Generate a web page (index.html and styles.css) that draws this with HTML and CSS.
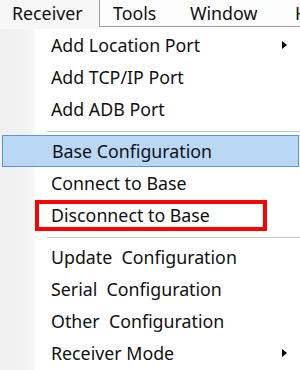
FILE: index.html
```html
<!DOCTYPE html>
<html>
<head>
<meta charset="utf-8">
<link rel="stylesheet" href="styles.css">
</head>
<body>
<div class="menubar">
  <div class="tab active">Receiver</div>
  <div class="bar-rest">
    <span class="tab tools">Tools</span>
    <span class="tab window">Window</span>
    <span class="tab help">H</span>
  </div>
</div>
<div class="dropdown">
  <div class="item">Add Location Port<span class="arrow"></span></div>
  <div class="item">Add TCP/IP Port</div>
  <div class="item">Add ADB Port</div>
  <div class="sep"><div class="line"></div></div>
  <div class="item hover">Base Configuration</div>
  <div class="item">Connect to Base</div>
  <div class="item marked">Disconnect to Base<span class="redbox"></span></div>
  <div class="sep"><div class="line"></div></div>
  <div class="item">Update  Configuration</div>
  <div class="item">Serial  Configuration</div>
  <div class="item">Other  Configuration</div>
  <div class="item">Receiver Mode<span class="arrow"></span></div>
</div>
</body>
</html>
```
FILE: styles.css
```css
html, body {
  margin: 0;
  padding: 0;
  background: #ffffff;
  width: 300px;
  height: 370px;
  overflow: hidden;
}
body {
  font-family: "Noto Sans", "Open Sans", sans-serif;
  font-size: 17.8px;
  color: #111111;
}
.menubar {
  display: flex;
  height: 29px;
  background: #ffffff;
}
.tab.active {
  width: 99px;
  box-sizing: border-box;
  padding-left: 12px;
  background: #f7f7f7;
  line-height: 26px;
}
.bar-rest {
  flex: 1;
  height: 27px;
  box-sizing: border-box;
  border-left: 1px solid #a0a0a0;
  border-bottom: 1px solid #a0a0a0;
  background: #fdfdfd;
  display: flex;
  line-height: 26px;
  white-space: nowrap;
  overflow: hidden;
}
.tools { margin-left: 13px; width: 77px; flex: none; }
.window { width: 105px; flex: none; }
.help { flex: none; }
.dropdown {
  background: linear-gradient(to right, #f0f0f0 0, #f3f3f3 30px, #f8f8f8 34px, #ffffff 35px);
  height: 341px;
}
.item {
  position: relative;
  display: flex;
  align-items: center;
  height: 32px;
  box-sizing: border-box;
  padding-left: 51px;
  white-space: pre;
}
.item.hover {
  margin-left: 2px;
  margin-right: 1px;
  padding-left: 49px;
  background: #b9d8f6;
  border: 1px solid #5d95dc;
}
.arrow {
  margin-left: auto;
  margin-right: 13px;
  width: 0;
  height: 0;
  border-top: 4px solid transparent;
  border-bottom: 4px solid transparent;
  border-left: 5px solid #000000;
}
.sep {
  height: 10px;
  padding-top: 6px;
  box-sizing: border-box;
}
.sep .line {
  margin-left: 47px;
  height: 1px;
  background: #c5c5c5;
}
.redbox {
  position: absolute;
  left: 35px;
  top: 1px;
  width: 232px;
  height: 31px;
  box-sizing: border-box;
  border: 4px solid #ff0000;
}
```
